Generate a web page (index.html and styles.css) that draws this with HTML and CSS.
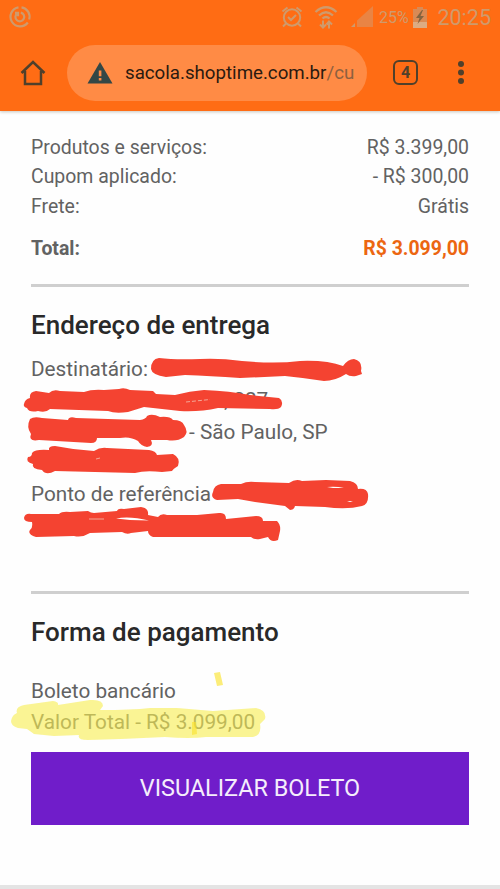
FILE: index.html
```html
<!DOCTYPE html>
<html lang="pt-BR">
<head>
<meta charset="utf-8">
<title>Sacola</title>
<link rel="stylesheet" href="styles.css">
</head>
<body>
<header class="chrome">
  <div class="status">
    <svg class="ring" width="24" height="24" viewBox="0 0 24 24" fill="none" stroke="#cf9a6c" stroke-width="2.2"><path d="M10.500 2.300A9.600 9.600 0 1 0 19.800 17.500M13.500 2.300A9.600 9.600 0 0 1 21.200 14.500"/><path d="M9.300 8.300A4.400 4.400 0 1 0 12.800 7.600M7 7.800h3v3.500"/></svg>
    <svg class="alarm" width="22" height="24" viewBox="0 0 22 24" fill="none" stroke="#cf9a6c" stroke-width="2"><circle cx="11" cy="12.500" r="8.200"/><path d="M7 12l3 3 5-5M1.500 6.500l5-4M20.500 6.500l-5-4M5 18.500l-3 3M17 18.500l3 3"/></svg>
    <svg class="wifi" width="24" height="26" viewBox="0 0 24 26" fill="none" stroke="#cf9a6c" stroke-width="2.300"><path d="M1.500 8Q12-1.500 22.500 8M5 11.500Q12 5 19 11.500M8.500 14.500Q12 11.500 15.500 14.500"/><path stroke-width="2" d="M9 16.500v7M6 20.500l3 3 3-3M15 24.500v-7M12.500 20.500l2.500-3 3 3"/></svg>
    <svg class="signal" width="22" height="22" viewBox="0 0 22 22"><path d="M22 0v21H6V14.500z" fill="#e98444"/><path d="M0 21l4-4v4z" fill="#cf9a6c"/></svg>
    <span class="percent">25%</span>
    <svg class="battery" width="14" height="21" viewBox="0 0 14 21"><path d="M4 0h6v2h4v19H0V2h4z" fill="#d98a55"/><path d="M0 15h14v6H0z" fill="#dcab83"/><path d="M9 3L3 11h3.500L4.500 17 11 9H7.500L10 3z" fill="#83633f"/></svg>
    <span class="clock">20:25</span>
  </div>
  <div class="toolbar">
    <svg class="home" width="26" height="26" viewBox="0 0 26 26" fill="none" stroke="#50402b" stroke-width="2.500"><path d="M1.500 13L13 2l11.500 11M5 11v13h16V11"/></svg>
    <div class="address">
      <svg width="26" height="22" viewBox="0 0 26 22"><path d="M13 0l12.500 21.500H.5z" fill="#334746"/><path d="M11.800 8.500h2.600v5.700h-2.600zM11.800 16h2.600v2.500h-2.600z" fill="#ff8b45"/></svg>
      <span class="url">sacola.shoptime.com.br<i>/cu</i></span>
    </div>
    <span class="tabs">4</span>
    <svg class="menu" width="8" height="24" viewBox="0 0 8 24" fill="#50402b"><circle cx="4" cy="3" r="3"/><circle cx="4" cy="11.500" r="3"/><circle cx="4" cy="20" r="3"/></svg>
  </div>
</header>
<main>
  <dl class="summary">
    <div><dt>Produtos e serviços:</dt><dd>R$ 3.399,00</dd></div>
    <div><dt>Cupom aplicado:</dt><dd>- R$ 300,00</dd></div>
    <div><dt>Frete:</dt><dd>Grátis</dd></div>
    <div class="total"><dt>Total:</dt><dd>R$ 3.099,00</dd></div>
  </dl>
  <section class="delivery">
    <h2>Endereço de entrega</h2>
    <p>Destinatário:</p>
    <p class="number">, 027</p>
    <p class="city">- São Paulo, SP</p>
    <p class="blank"></p>
    <p>Ponto de referência</p>
    <p class="blank"></p>
  </section>
  <section class="payment">
    <h2>Forma de pagamento</h2>
    <p>Boleto bancário</p>
    <p>Valor Total - R$ 3.099,00</p>
    <button>VISUALIZAR BOLETO</button>
  </section>
</main>
<footer></footer>
<svg class="marks" width="500" height="889" viewBox="0 0 500 889">
  <g fill="#f44331">
    <path d="M151 369Q151 359 159 358Q175 360 200 359Q220 358 242 361Q275 364 300 361Q327 360 343 366Q348 359 354 359Q363 361 361 371L362 374L356 376Q350 377 346 374Q335 381 324 381Q305 378 285 376L240 378Q210 376 185 375L166 377Q152 375 151 369Z"/>
    <path d="M24 404Q25 399 30 398Q29 392 36 391L49 393Q53 389 60 391L84 392Q92 389 104 390L119 389Q124 387 130 390L153 391L156 394L175 395Q190 391 204 390Q230 391 250 395L279 398Q284 401 281 407Q278 410 270 409L218 408Q200 412 180 411L144 407L128 412Q115 414 108 411L50 409Q46 413 38 411Q29 413 27 408Q23 407 24 404Z"/>
    <path d="M30 419Q34 416 42 418L68 420Q69 416 76 418L140 420Q146 419 147 416Q152 413 160 417Q170 416 173 420Q182 420 184 425Q189 432 184 437Q177 442 167 440L151 440Q154 446 147 447Q141 446 138 441Q130 436 120 438L97 438Q97 443 91 443L39 440Q28 442 31 434Q26 427 30 419Z"/>
    <path d="M32 453Q35 449 49 450Q48 446 55 446Q75 450 94 451Q100 447 107 448L149 450Q156 451 157 455L173 454Q181 458 178 466Q173 469 172 471L162 472Q145 470 135 473L55 471Q46 476 42 470Q31 469 33 464Q25 462 28 457Q32 457 32 453Z"/>
    <path d="M213 492Q214 485 221 484L241 484Q247 481 255 482L289 483Q296 478 302 481L326 480L350 481Q358 483 358 489Q367 488 368 494Q369 504 362 506Q347 510 325 507L295 506Q294 510 290 510L285 506L255 502L238 499L217 500Q210 498 213 492Z"/>
    <path d="M24 518Q25 513 31 514L59 514Q62 511 70 512L88 511Q91 513 94 513L117 511Q118 508 124 509L141 507Q149 508 148 515L158 517Q161 513 167 515L197 515L219 513Q226 512 226 519L256 516Q263 516 263 521L277 521Q281 525 280 531L278 540Q271 543 268 537L260 539Q254 540 251 537L220 537L153 537Q148 535 148 531L131 533Q127 535 122 532L90 533Q82 538 74 536L36 537Q27 534 30 530Q33 528 32 522Q24 522 24 518Z"/>
  </g>
  <path d="M116 518.500Q130 516 149 520.500L130 520Z" fill="#fff"/>
  <path d="M327 487Q336 486 344 488L333 488ZM347 501l6 0-3 1Z" fill="#fff"/>
  <path d="M186 402l24-2.500" stroke="#f3a797" stroke-dasharray="4 2" fill="none"/>
  <path d="M89 519l15 0M96 459l4-1" stroke="#f3a797" fill="none"/>
  <g fill="#f7ed52" fill-opacity=".62"><path d="M11 721Q12 715 17 713Q15 707 24 705L53 701Q59 702 58 705L90 700Q103 699 103 706L100 710Q132 710 150 708L177 708L213 711L256 708Q267 710 265 719L260 724Q262 735 253 737L206 737Q190 739 165 737L121 739L88 740Q77 740 79 735L54 736L34 734Q30 731 27 729L18 728Q11 726 11 721Z"/></g>
  <path d="M214 673l6-1 3 13-6 1ZM192 722l4 0 1 12-5 1Z" fill="#fae331" fill-opacity=".65"/>
</svg>
</body>
</html>
```
FILE: styles.css
```css
* { box-sizing: border-box; }
body, h2, p, dl, dt, dd { margin: 0; }
body {
  position: relative;
  display: flex;
  flex-direction: column;
  width: 500px;
  height: 889px;
  overflow: hidden;
  background: #fefefe;
  color: #626262;
  font: 19.450px Roboto, sans-serif;
}
svg { display: block; flex: none; }
.chrome {
  flex: none;
  height: 111px;
  background: #ff6c14;
  box-shadow: 0 1px 3px #c9c6bd;
}
.status {
  display: flex;
  align-items: center;
  height: 34px;
  padding: 0 9px 0 8px;
  color: #cf9a6c;
}
.alarm { margin-left: 249px; }
.wifi { margin-left: 11px; }
.signal { margin-left: 13px; }
.percent { margin-left: 6px; width: 33px; font-size: 16px; white-space: nowrap; }
.battery { margin-left: 3px; }
.clock { margin-left: 10px; font-size: 21.500px; white-space: nowrap; }
.toolbar { display: flex; align-items: center; height: 77px; padding: 0 35px 0 20px; }
.address {
  display: flex;
  align-items: center;
  gap: 12px;
  width: 300px;
  height: 56px;
  margin-left: 21px;
  padding-left: 20px;
  border-radius: 28px;
  background: #ff8b45;
  color: #2b1a10;
}
.url { font-size: 18.700px; white-space: nowrap; }
.url i { font-style: normal; color: #8d6040; }
.tabs {
  width: 25px;
  height: 25px;
  margin-left: 26px;
  border: 2.5px solid #50402b;
  border-radius: 6px;
  color: #50402b;
  font-size: 16px;
  font-weight: 700;
  line-height: 21px;
  text-align: center;
}
.menu { margin-left: 39px; }
main { flex: 1; padding: 22px 31px 0; }
.summary { height: 153.500px; border-bottom: 3px solid #cfcfcf; }
.summary div { display: flex; justify-content: space-between; line-height: 29.300px; }
.summary .total { margin-top: 13.500px; font-weight: 700; }
.total dd { color: #ec6611; }
h2 { color: #292929; font-size: 26px; font-weight: 500; line-height: 30px; white-space: nowrap; }
p { height: 31.300px; font-size: 20.750px; line-height: 31.300px; white-space: nowrap; }
.delivery { height: 307px; padding-top: 23.500px; border-bottom: 3px solid #cfcfcf; }
.delivery h2 { margin-bottom: 14px; }
.number { padding-left: 193px; }
.city { padding-left: 158px; }
.payment { padding-top: 23.500px; }
.payment h2 { margin-bottom: 28.500px; }
button {
  display: block;
  width: 100%;
  height: 73px;
  margin-top: 13.500px;
  border: 0;
  background: #701dca;
  color: #f5edfc;
  font: 23.400px Roboto, sans-serif;
}
footer { flex: none; height: 4px; background: #e4e4e4; }
.marks { position: absolute; top: 0; left: 0; pointer-events: none; }
```
